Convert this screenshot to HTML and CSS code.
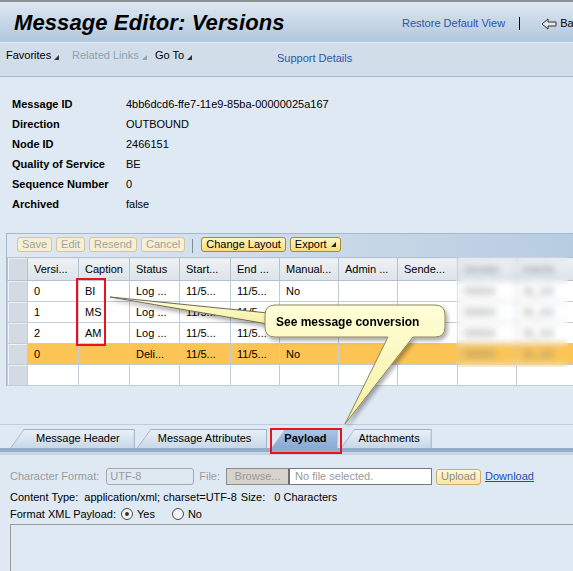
FILE: index.html
```html
<!DOCTYPE html>
<html>
<head>
<meta charset="utf-8">
<title>Message Editor: Versions</title>
<link rel="stylesheet" href="styles.css">
</head>
<body>
<div class="page">
  <header class="titlebar">
    <h1 class="title">Message Editor: Versions</h1>
    <div class="title-actions">
      <a class="link">Restore Default View</a>
      <span class="bar-sep"></span>
      <span class="back"><svg class="back-icon" width="16" height="12" viewBox="0 0 16 12"><path d="M1,6 L7,1 V4 H15 V8 H7 V11 Z" fill="#e6e6e6" stroke="#333" stroke-width="1" stroke-linejoin="round"/></svg>Back</span>
    </div>
  </header>

  <nav class="navbar">
    <span class="menu m-fav">Favorites<i class="tri"></i></span>
    <span class="menu m-rel dim">Related Links<i class="tri"></i></span>
    <span class="menu m-go">Go To<i class="tri"></i></span>
    <a class="link support">Support Details</a>
  </nav>

  <section class="info">
    <div class="info-row"><span class="lbl">Message ID</span><span>4bb6dcd6-ffe7-11e9-85ba-00000025a167</span></div>
    <div class="info-row"><span class="lbl">Direction</span><span>OUTBOUND</span></div>
    <div class="info-row"><span class="lbl">Node ID</span><span>2466151</span></div>
    <div class="info-row"><span class="lbl">Quality of Service</span><span>BE</span></div>
    <div class="info-row"><span class="lbl">Sequence Number</span><span>0</span></div>
    <div class="info-row"><span class="lbl">Archived</span><span>false</span></div>
  </section>

  <section class="panel">
    <div class="toolbar">
      <button class="btn off">Save</button>
      <button class="btn off">Edit</button>
      <button class="btn off">Resend</button>
      <button class="btn off">Cancel</button>
      <span class="tb-sep"></span>
      <button class="btn on">Change Layout</button>
      <button class="btn on">Export<i class="tri"></i></button>
    </div>
    <table class="grid">
      <colgroup>
        <col class="c-sel"><col class="c51"><col class="c51"><col class="c50"><col class="c51"><col class="c49"><col class="c59"><col class="c59"><col class="c60"><col class="c59"><col class="c60">
      </colgroup>
      <thead>
        <tr>
          <th class="sel"></th><th>Versi...</th><th>Caption</th><th>Status</th><th>Start...</th><th>End ...</th><th>Manual...</th><th>Admin ...</th><th>Sende...</th><th class="hid">Sender</th><th class="hid">Interfa</th>
        </tr>
      </thead>
      <tbody>
        <tr><td class="sel"></td><td>0</td><td>BI</td><td>Log ...</td><td>11/5...</td><td>11/5...</td><td>No</td><td></td><td></td><td class="hid">0000X</td><td class="hid">SI_XX</td></tr>
        <tr><td class="sel"></td><td>1</td><td>MS</td><td>Log ...</td><td>11/5...</td><td>11/5...</td><td></td><td></td><td></td><td class="hid">0000X</td><td class="hid">SI_XX</td></tr>
        <tr><td class="sel"></td><td>2</td><td>AM</td><td>Log ...</td><td>11/5...</td><td>11/5...</td><td></td><td></td><td></td><td class="hid">0000X</td><td class="hid">SI_XX</td></tr>
        <tr class="current"><td class="sel"></td><td>0</td><td></td><td>Deli...</td><td>11/5...</td><td>11/5...</td><td>No</td><td></td><td></td><td class="hid">0000X</td><td class="hid">SI_XX</td></tr>
        <tr><td class="sel"></td><td></td><td></td><td></td><td></td><td></td><td></td><td></td><td></td><td></td><td></td></tr>
      </tbody>
    </table>
  </section>

  <div class="tabstrip">
    <div class="tab t-hdr"><span>Message Header</span></div>
    <div class="tab t-attr"><span>Message Attributes</span></div>
    <div class="tab t-pay active"><span>Payload</span></div>
    <div class="tab t-att"><span>Attachments</span></div>
  </div>
  <div class="tabbar"></div>

  <section class="form">
    <div class="frow r1">
      <span class="dim-lbl">Character Format:</span>
      <span class="field">UTF-8</span>
      <span class="dim-lbl file-lbl">File:</span>
      <span class="browse">Browse...</span><span class="filebox">No file selected.</span>
      <span class="upload">Upload</span>
      <a class="dl">Download</a>
    </div>
    <div class="frow r2">
      <span>Content Type:</span>
      <span class="ct-val">application/xml; charset=UTF-8</span>
      <span class="sz-lbl">Size:</span>
      <span class="sz-val">0 Characters</span>
    </div>
    <div class="frow r3">
      <span>Format XML Payload:</span>
      <span class="radio checked"></span><span>Yes</span>
      <span class="radio second"></span><span>No</span>
    </div>
    <div class="payload-area"></div>
  </section>

  <div class="blur-mask"></div>

  <svg class="overlay" width="573" height="571" viewBox="0 0 573 571">
    <defs>
      <linearGradient id="bub" x1="0" y1="0" x2="0" y2="1">
        <stop offset="0" stop-color="#ffffd8"/>
        <stop offset="1" stop-color="#f5efa0"/>
      </linearGradient>
      <filter id="sh" x="-20%" y="-20%" width="150%" height="160%">
        <feDropShadow dx="2" dy="3" stdDeviation="2" flood-color="#000" flood-opacity="0.35"/>
      </filter>
    </defs>
    <path d="M110,297 L268,313 L268,324 Z" fill="url(#bub)" stroke="#6e6c58" stroke-width="1" filter="url(#sh)"/>
    <path d="M275,305 H435 Q445,305 445,315 V327 Q445,337 435,337 H413 L345,424 L388,337 H275 Q265,337 265,327 V315 Q265,305 275,305 Z" fill="url(#bub)" stroke="#8c8660" stroke-width="1" filter="url(#sh)"/>
    <text x="276" y="326" class="callout-text">See message conversion</text>
    <rect x="77" y="279" width="28" height="66" fill="none" stroke="#e8141b" stroke-width="2"/>
    <rect x="271" y="429" width="70" height="24" fill="none" stroke="#e8141b" stroke-width="2"/>
  </svg>
</div>
</body>
</html>
```

FILE: styles.css
```css
* { box-sizing: border-box; }
html, body { margin: 0; padding: 0; }
body {
  width: 573px;
  height: 571px;
  overflow: hidden;
  background: #dfe9f3;
  font-family: "Liberation Sans", Arial, sans-serif;
  font-size: 11px;
  line-height: 13px;
  color: #000;
}
.page {
  position: relative;
  width: 573px;
  height: 571px;
  overflow: hidden;
}

/* title bar */
.titlebar {
  display: flex;
  align-items: flex-start;
  width: 620px;
  height: 43px;
  border-top: 2px solid #8c9196;
  border-bottom: 1px solid #e6eef6;
  padding: 10px 0 0 14px;
  background: linear-gradient(#dde7f1, #b2c7dc);
  white-space: nowrap;
}
.title {
  margin: 0;
  flex: 0 0 388px;
  font-size: 22px;
  line-height: 22px;
  font-weight: bold;
  font-style: italic;
  letter-spacing: 0.1px;
}
.title-actions {
  display: flex;
  align-items: center;
  margin-top: 5px;
}
.link { color: #2b55ad; text-decoration: none; }
.bar-sep {
  width: 1px;
  height: 13px;
  background: #000;
  margin-left: 14px;
}
.back {
  display: flex;
  align-items: center;
  margin-left: 21px;
}
.back-icon { margin-right: 3px; }

/* nav bar */
.navbar {
  display: flex;
  align-items: flex-start;
  height: 34px;
  padding: 6px 0 0 6px;
  background: #d1dde8;
  border-bottom: 1px solid #a9b9c9;
  white-space: nowrap;
}
.menu { display: flex; align-items: flex-end; }
.m-fav { flex: 0 0 66px; }
.m-rel { flex: 0 0 83px; }
.m-go { flex: 0 0 122px; }
.tri {
  width: 0;
  height: 0;
  border-left: 5px solid transparent;
  border-bottom: 5px solid #333;
  margin: 0 0 2px 3px;
}
.dim { color: #8ea2b6; }
.dim .tri { border-bottom-color: #8ea2b6; }
.support { margin-top: 3px; }

/* info */
.info { padding: 17px 0 0 12px; }
.info-row {
  display: flex;
  align-items: center;
  height: 20px;
}
.lbl { flex: 0 0 114px; font-weight: bold; }

/* panel */
.panel {
  margin: 19px 0 0 6px;
  width: 590px;
  border-top: 1px solid #a6b9cc;
  border-left: 1px solid #a6b9cc;
}
.toolbar {
  display: flex;
  align-items: flex-start;
  gap: 4px;
  height: 23px;
  padding: 3px 0 0 10px;
  background: linear-gradient(to right, #e0e9f2, #b6cbe0);
}
.btn {
  height: 15px;
  padding: 0 4px;
  font: inherit;
  line-height: 13px;
  border-radius: 3px;
  display: flex;
  align-items: center;
}
.btn.off {
  background: #f6efd2;
  border: 1px solid #d4c69c;
  color: #a2a2a2;
}
.btn.on {
  background: linear-gradient(#fff5c4, #f9dc7c);
  border: 1px solid #a58a36;
  color: #000;
}
.btn .tri { margin: 0 0 1px 4px; border-bottom-color: #222; }
.tb-sep {
  width: 1px;
  height: 14px;
  margin: 2px 4px 0 3px;
  background: #7d8c9a;
}

.grid {
  border-collapse: collapse;
  table-layout: fixed;
  width: 569px;
}
.c-sel { width: 20px; }
.c49 { width: 49px; }
.c50 { width: 50px; }
.c51 { width: 51px; }
.c59 { width: 59px; }
.c60 { width: 60px; }
.grid th {
  height: 23px;
  padding: 0 0 0 6px;
  text-align: left;
  font-weight: normal;
  background: linear-gradient(#eef2f5, #dce2e8);
  border: 1px solid #b4c2cf;
  white-space: nowrap;
  overflow: hidden;
}
.grid td {
  height: 21px;
  padding: 0 0 0 6px;
  background: #fff;
  border: 1px solid #c3cdd7;
  white-space: nowrap;
  overflow: hidden;
}
.grid .sel {
  padding: 0;
  background: #d3dae1;
  box-shadow: inset 1px 1px 0 #eef1f4;
}
.grid tr.current td { background: #fcc455; }
.grid tr.current td.sel { background: #d3dae1; }
.grid .hid { color: #8a8a8a; }

.blur-mask {
  position: absolute;
  left: 456px;
  top: 257px;
  width: 112px;
  height: 110px;
  backdrop-filter: blur(3px);
  -webkit-backdrop-filter: blur(3px);
}

/* tabs */
.tabstrip {
  display: flex;
  margin-top: 38px;
  padding: 4px 0 0 10px;
  border-top: 1px solid #bccddf;
  height: 24px;
}
.tab {
  position: relative;
  height: 19px;
  display: flex;
  align-items: center;
  background: #9cb2c8;
  clip-path: polygon(14px 0, 100% 0, 100% 100%, 0 100%);
  white-space: nowrap;
}
.tab::before {
  content: "";
  position: absolute;
  left: 1px;
  top: 1px;
  right: 1px;
  bottom: 0;
  background: linear-gradient(#e9f0f7, #c8d8e8);
  clip-path: polygon(13px 0, 100% 0, 100% 100%, 0 100%);
}
.tab span { position: relative; }
.t-hdr { padding: 0 15px 0 26px; }
.t-attr { padding: 0 16px 0 21px; margin-left: 2px; }
.t-pay { padding: 0 11px 0 13px; margin-left: 4px; }
.t-att { padding: 0 12px 0 18px; margin-left: 3px; }
.tab.active::before { background: linear-gradient(#aac6e6, #88aad4); }
.tab.active span { font-weight: bold; }
.tabbar {
  height: 7px;
  background: linear-gradient(#93aecb 0, #93aecb 4px, #c5d5e5 4px);
}

/* form */
.form { padding: 13px 0 0 10px; }
.frow {
  display: flex;
  align-items: center;
  white-space: nowrap;
}
.r1 { height: 17px; }
.r2 { height: 14px; margin-top: 5px; }
.r3 { height: 14px; margin-top: 3px; }
.dim-lbl { color: #9a9a9a; }
.field {
  width: 88px;
  height: 17px;
  margin-left: 7px;
  padding-left: 3px;
  border: 1px solid #a8a8a8;
  border-radius: 3px;
  color: #9a9a9a;
  display: flex;
  align-items: center;
}
.file-lbl { margin-left: 5px; }
.browse {
  width: 64px;
  height: 17px;
  margin-left: 6px;
  background: #d6d3cc;
  border: 1px solid #8c8c8c;
  border-right: 2px solid #6e6e6e;
  color: #9a9a9a;
  display: flex;
  align-items: center;
  justify-content: center;
}
.filebox {
  width: 142px;
  height: 17px;
  padding-left: 5px;
  background: #fff;
  border: 1px solid #777;
  border-left: none;
  color: #9a9a9a;
  display: flex;
  align-items: center;
}
.upload {
  width: 45px;
  height: 16px;
  margin-left: 4px;
  background: linear-gradient(#fff6d4, #f8e6a8);
  border: 1px solid #c9ae6c;
  border-radius: 3px;
  color: #8c8c8c;
  display: flex;
  align-items: center;
  justify-content: center;
}
.dl {
  margin-left: 4px;
  color: #1d4fb8;
  text-decoration: underline;
}
.ct-val { margin-left: 6px; }
.sz-lbl { margin-left: 4px; }
.sz-val { margin-left: 9px; }
.radio {
  width: 12px;
  height: 12px;
  margin: 0 4px 0 5px;
  border: 1px solid #4a4a4a;
  border-radius: 50%;
  background: #f6f6f6;
  display: flex;
  align-items: center;
  justify-content: center;
}
.radio.checked::after {
  content: "";
  width: 4px;
  height: 4px;
  border-radius: 50%;
  background: #333;
}
.radio.second { margin-left: 17px; }
.payload-area {
  margin-top: 3px;
  height: 70px;
  border: 1px solid #9a9a9a;
  border-right: none;
  border-bottom: none;
}

/* annotation overlay */
.overlay {
  position: absolute;
  left: 0;
  top: 0;
  pointer-events: none;
}
.callout-text {
  font-family: "Liberation Sans", Arial, sans-serif;
  font-weight: bold;
  font-size: 12px;
}
```
